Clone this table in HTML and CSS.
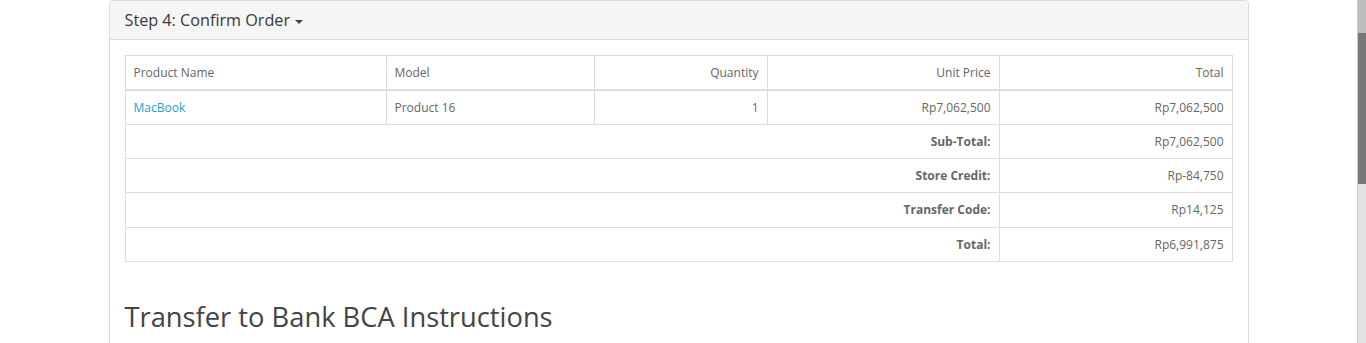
FILE: index.html
```html
<!DOCTYPE html>
<html lang="en">
  <head>
    <meta charset="utf-8">
    <title>Checkout</title>
    <link rel="stylesheet" href="styles.css">
  </head>
  <body>
    <div class="page">
      <div class="main">
        <div class="container">
          <div class="panel">
            <div class="panel-heading">
              <h4 class="panel-title">Step 4: Confirm Order <span class="caret"></span></h4>
            </div>
            <div class="panel-body">
              <div class="table-responsive">
                <table class="table-bordered">
                  <colgroup>
                    <col class="col-name">
                    <col class="col-model">
                    <col class="col-qty">
                    <col class="col-unit">
                    <col class="col-total">
                  </colgroup>
                  <thead>
                    <tr>
                      <td class="text-left">Product Name</td>
                      <td class="text-left">Model</td>
                      <td class="text-right">Quantity</td>
                      <td class="text-right">Unit Price</td>
                      <td class="text-right">Total</td>
                    </tr>
                  </thead>
                  <tbody>
                    <tr>
                      <td class="text-left"><a href="#">MacBook</a></td>
                      <td class="text-left">Product 16</td>
                      <td class="text-right">1</td>
                      <td class="text-right">Rp7,062,500</td>
                      <td class="text-right">Rp7,062,500</td>
                    </tr>
                  </tbody>
                  <tfoot>
                    <tr>
                      <td colspan="4" class="text-right"><strong>Sub-Total:</strong></td>
                      <td class="text-right">Rp7,062,500</td>
                    </tr>
                    <tr>
                      <td colspan="4" class="text-right"><strong>Store Credit:</strong></td>
                      <td class="text-right">Rp-84,750</td>
                    </tr>
                    <tr>
                      <td colspan="4" class="text-right"><strong>Transfer Code:</strong></td>
                      <td class="text-right">Rp14,125</td>
                    </tr>
                    <tr>
                      <td colspan="4" class="text-right"><strong>Total:</strong></td>
                      <td class="text-right">Rp6,991,875</td>
                    </tr>
                  </tfoot>
                </table>
              </div>
              <h2>Transfer to Bank BCA Instructions</h2>
            </div>
          </div>
        </div>
      </div>
      <div class="scrollbar"><div class="scroll-up"></div><div class="scroll-thumb"></div></div>
    </div>
  </body>
</html>
```

FILE: styles.css
```css
html, body {
  margin: 0;
  height: 100%;
  overflow: hidden;
}
body {
  font-family: "Open Sans", sans-serif;
  font-size: 12px;
  line-height: 1.42857;
  color: #666;
  background: #fff;
}
.page {
  display: flex;
  height: 100%;
}
.main {
  flex: 1;
}
.container {
  width: 1140px;
  margin: 0 auto;
}
.panel {
  border: 1px solid #ddd;
  border-radius: 4px;
  background: #fff;
}
.panel-heading {
  background: #f5f5f5;
  border-bottom: 1px solid #ddd;
  padding: 11px 15px 9px;
  border-radius: 3px 3px 0 0;
}
.panel-title {
  margin: 0;
  font-size: 16.2px;
  font-weight: normal;
  line-height: 1.1;
  color: #3a3a3a;
}
.caret {
  display: inline-block;
  width: 0;
  height: 0;
  margin-left: 1px;
  vertical-align: middle;
  border-top: 4px solid #444;
  border-left: 4px solid transparent;
  border-right: 4px solid transparent;
}
.panel-body {
  padding: 15px 15px 60px;
}
.table-responsive {
  margin-bottom: 20px;
}
table {
  width: 100%;
  border-collapse: collapse;
  border-spacing: 0;
  table-layout: fixed;
}
.col-name { width: 261px; }
.col-model { width: 208px; }
.col-qty { width: 173px; }
.col-unit { width: 232px; }
.table-bordered td {
  border: 1px solid #ddd;
  padding: 8px;
  vertical-align: top;
}
.table-bordered thead td {
  border-bottom-width: 2px;
}
.text-left { text-align: left; }
.text-right { text-align: right; }
a {
  color: #23a1d1;
  text-decoration: none;
}
strong {
  font-weight: bold;
}
h2 {
  font-size: 27.3px;
  font-weight: normal;
  line-height: 1.1;
  color: #444;
  margin: 40px 0 10px;
}
.scrollbar {
  width: 8px;
  border-left: 1px solid #ccc;
  background: #e2e2e2;
}
.scroll-up {
  height: 33px;
  background: #bdbdbd;
}
.scroll-thumb {
  height: 151px;
  background: #787878;
}
```
